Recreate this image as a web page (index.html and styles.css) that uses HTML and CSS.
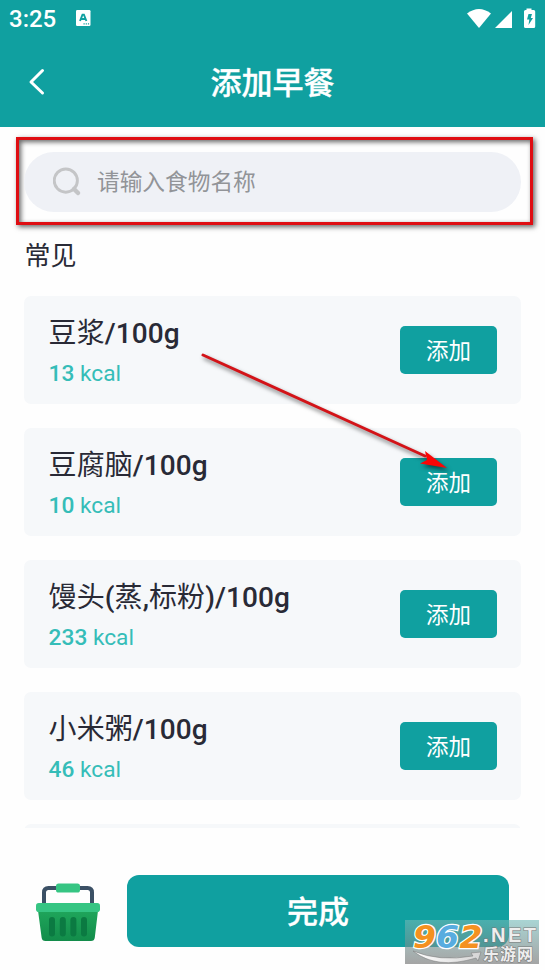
FILE: index.html
```html
<!DOCTYPE html>
<html lang="zh-CN">
<head>
<meta charset="utf-8">
<title>添加早餐</title>
<link rel="stylesheet" href="styles.css">
</head>
<body>
<div class="screen">
  <header class="header">
    <div class="status">
      <span class="time">3:25</span>
      <svg class="ime" width="15" height="17" viewBox="0 0 15 17"><rect width="14.5" height="16" rx="1.2" fill="#fff"/><path d="M4 11 6.500 4.600h1.400l2.500 6.400M5 9h4.600" fill="none" stroke="#10a0a0" stroke-width="1.900"/><path d="M7.500 13.800h1.200m1 0h1.200m1 0h1.200" stroke="#10a0a0" stroke-width="1.200"/></svg>
      <svg class="signals" width="69" height="22" viewBox="0 0 69 22" fill="#fff"><path d="M0 5.500Q12 -3.500 24 5.500L12 20Z"/><path d="M28 20 45 3v17Z"/><path d="M59.500 0.500h5V2h2.200a1.500 1.500 0 0 1 1.500 1.500v15a1.500 1.500 0 0 1-1.500 1.500h-8.200a1.500 1.500 0 0 1-1.500-1.500v-15A1.500 1.500 0 0 1 58.500 2h1Z"/><path d="M61.500 6h3.500l-1.200 4h2.200L61.500 17l.8-5.500H60Z" fill="#10a0a0"/></svg>
    </div>
    <nav class="nav">
      <svg class="back" width="18" height="28" viewBox="0 0 18 28"><path d="M14.500 2.500 3 14l11.500 11" fill="none" stroke="#fff" stroke-width="3" stroke-linecap="round" stroke-linejoin="round"/></svg>
      <h1>添加早餐</h1>
    </nav>
  </header>

  <main>
    <div class="marked">
      <div class="search">
        <svg width="30" height="30" viewBox="0 0 30 30" fill="none" stroke="#c4c5c7"><circle cx="12.800" cy="13.600" r="11.600" stroke-width="2.900"/><path d="m21 22 4 4" stroke-width="4.500" stroke-linecap="round"/></svg>
        <span>请输入食物名称</span>
      </div>
    </div>
    <h2>常见</h2>
    <div class="list">
      <section class="card"><div><h3><span>豆浆</span>/100g</h3><p><b>13</b> kcal</p></div><button class="add">添加</button></section>
      <section class="card"><div><h3><span>豆腐脑</span>/100g</h3><p><b>10</b> kcal</p></div><button class="add">添加</button></section>
      <section class="card"><div><h3><span>馒头</span>(<span>蒸</span>,<span>标粉</span>)/100g</h3><p><b>233</b> kcal</p></div><button class="add">添加</button></section>
      <section class="card"><div><h3><span>小米粥</span>/100g</h3><p><b>46</b> kcal</p></div><button class="add">添加</button></section>
      <section class="card"></section>
    </div>
  </main>

  <footer class="footer">
    <svg class="basket" width="66" height="60" viewBox="0 0 66 60">
      <defs><linearGradient id="g" x2="0" y2="1"><stop stop-color="#20a75c"/><stop offset="1" stop-color="#128c4a"/></linearGradient></defs>
      <path d="M8 23V9.500Q8 5 12.500 5h39Q56 5 56 9.500V23" fill="none" stroke="#3b5065" stroke-width="4"/>
      <rect x="20" y="0.500" width="24" height="9" rx="2.600" fill="#36c583"/>
      <path d="M1.800 26h60.400L58.800 54.500Q58.400 58 55 58H9.500Q6 58 5.600 54.500Z" fill="url(#g)"/>
      <rect x="0" y="20" width="64" height="9" rx="2.800" fill="#36c583"/>
      <path d="M16 37v13.500m10.800-13.500v13.500M37.400 37v13.500M48 37v13.500" stroke="#0b7a42" stroke-width="6" stroke-linecap="round"/>
    </svg>
    <button class="done">完成</button>
  </footer>

  <svg class="arrow" width="260" height="130" viewBox="0 0 260 130"><path d="m8 9 222 101" fill="none" stroke="#d31318" stroke-width="3" stroke-linecap="round"/><path d="m230 105 22 17-27-4.500 7-3.500Z" fill="#fb0505"/></svg>

  <div class="watermark">
    <svg width="134" height="44" viewBox="0 0 134 44">
      <defs><linearGradient id="s" x2="1"><stop stop-color="#fff"/><stop offset="1" stop-color="#d5d5d5"/></linearGradient></defs>
      <g class="digits"><text x="8" y="27.500" textLength="23" lengthAdjust="spacingAndGlyphs" fill="#f49120">9</text><text x="31" y="27.500" textLength="23" lengthAdjust="spacingAndGlyphs" fill="#58acdf">6</text><text x="54.500" y="27.500" textLength="23" lengthAdjust="spacingAndGlyphs" fill="#f49120">2</text></g>
      <text class="net" x="78" y="21.500" textLength="53">.NET</text>
      <text class="site" x="78" y="39.500" textLength="50">乐游网</text>
      <path d="M8 31Q34 42 68 36l-2-3 10-1-3 9-2-3Q32 50 8 31Z" fill="url(#s)" stroke="#777" stroke-width=".5"/>
    </svg>
  </div>
</div>
</body>
</html>
```
FILE: styles.css
```css
* { box-sizing: border-box; }
body { margin: 0; background: #fff; font-family: Roboto, "Noto Sans CJK SC", sans-serif; }
h1, h2, h3, p { margin: 0; }
button { border: 0; padding: 0; font-family: inherit; color: #fff; background: #10a0a0; }
svg { display: block; flex: none; }
.screen { position: relative; width: 545px; height: 970px; overflow: hidden; display: flex; flex-direction: column; background: #fefefe; }
.header { height: 127px; flex: none; background: #10a0a0; color: #fff; }
.status { height: 37px; display: flex; align-items: center; padding: 0 9px 0 9px; }
.time { font-size: 24px; font-weight: 500; line-height: 37px; width: 67px; padding-top: 1px; }
.signals { margin: 0 0 0 auto; }
.nav { height: 90px; display: grid; grid-template-columns: 80px 1fr 80px; align-items: center; }
.back { margin-left: 28px; }
h1 { text-align: center; font-size: 31px; line-height: 46px; font-weight: 500; padding-top: 3px; -webkit-text-stroke: .3px; }
main { height: 701px; overflow: hidden; padding: 10px 12px 0 16px; flex: none; }
.marked { height: 88px; border: 3px solid #df0d12; padding: 12px 9px 12px 5px; box-shadow: 2px 2px 5px #0009, inset 2px 2px 5px #0009; }
.search { height: 60px; border-radius: 30px; background: #eff1f6; display: flex; align-items: center; gap: 14px; padding-left: 29px; color: #929498; font-size: 22.700px; }
.search span { line-height: 34px; padding-top: 2px; }
h2 { font-size: 26px; font-weight: 400; line-height: 38px; color: #292a36; margin: 12px 0 21px 8.500px; }
.list { display: flex; flex-direction: column; gap: 24px; width: 497px; margin-left: 8px; }
.card { height: 108px; flex: none; border-radius: 7px; background: #f6f8fa; display: flex; align-items: center; justify-content: space-between; padding: 0 24px; }
.card > div { padding: 2px 0 0 .6px; }
h3 { font-size: 28px; line-height: 42px; font-weight: 500; color: #292a36; letter-spacing: .08px; }
h3 span { font-weight: 400; }
.card p { font-size: 22.700px; line-height: 32px; margin-top: 3px; color: #35bdb8; }
.card b { font-weight: 500; }
.add { width: 97px; height: 48px; border-radius: 5px; font-size: 22.500px; line-height: 48px; padding-top: 1px; }
.footer { display: flex; align-items: flex-start; padding: 47px 36px 0; }
.basket { margin-top: 8px; }
.done { width: 382px; height: 72px; margin-left: 25px; border-radius: 12px; font-size: 31px; line-height: 72px; font-weight: 500; flex: none; padding-top: 2px; -webkit-text-stroke: .3px; }
.arrow { position: absolute; left: 195px; top: 346px; filter: drop-shadow(2px 3px 2px #0008); }
.watermark { position: absolute; left: 405px; top: 920px; width: 134px; height: 44px; background: linear-gradient(#70b9b799, #777a); }
.digits { font: italic 700 32px "DejaVu Sans", sans-serif; stroke: #fff; stroke-width: 2.500px; paint-order: stroke; }
.net { font: 700 20px "Liberation Sans", sans-serif; fill: #eee; stroke: #777; stroke-width: 1px; paint-order: stroke; }
.site { font: 700 16px "Noto Sans CJK SC", sans-serif; fill: #eee; stroke: #777; stroke-width: 1px; paint-order: stroke; }
```
